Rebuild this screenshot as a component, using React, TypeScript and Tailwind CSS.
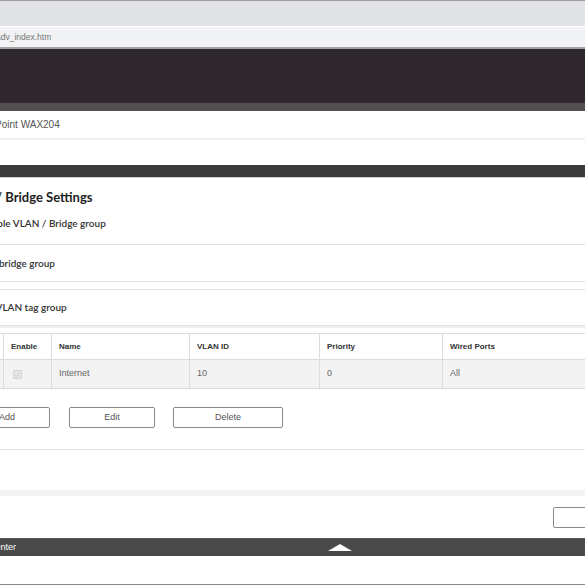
import React from "react";

const cols = "grid grid-cols-[24px_48px_138px_130px_123px_200px]";

function Cell({ children, className = "" }: { children?: React.ReactNode; className?: string }) {
  return (
    <div className={`flex items-center border-r border-[#dcdcdc] pl-[7px] ${className}`}>{children}</div>
  );
}

export default function App() {
  return (
    <div className="h-[585px] w-[585px] overflow-hidden bg-white font-['Lato',sans-serif]">
      {/* browser chrome */}
      <div className="h-px bg-[#9d9da1]" />
      <div className="h-[25px] bg-[#e1e2e6]" />
      <div className="h-px bg-white" />
      <div className="flex h-[20px] items-center bg-[#f1f2f4] pl-px font-['Liberation_Sans',sans-serif] text-[8.5px] text-[#777]">
        <span className="-ml-[5px]">adv_index.htm</span>
      </div>
      <div className="h-[2px] bg-[#a3a3a6]" />

      {/* router header */}
      <div className="h-[54px] bg-[#2e272d]" />
      <div className="h-[8px] bg-[#534d52]" />
      <div className="flex h-[27px] items-center font-['Liberation_Sans',sans-serif] text-[10px] text-[#555]">
        <span className="-ml-[90.5px] whitespace-nowrap">NETGEAR Access Point WAX204</span>
      </div>
      <div className="h-[2px] bg-[#efefef]" />
      <div className="h-[25px]" />
      <div className="h-[12px] bg-[#3b3b3b]" />
      <div className="h-px bg-[#d0d0d0]" />

      {/* settings */}
      <div className="flex h-[39px] items-center whitespace-nowrap text-[13px] font-bold text-[#1e1e1e]">
        <span className="-ml-[42px]">VLAN / Bridge Settings</span>
      </div>
      <div className="h-[28px] border-b border-[#e2e2e2] whitespace-nowrap text-[10px] leading-[12px] font-semibold text-[#333]">
        <span className="-ml-[19px] inline-block">Enable VLAN / Bridge group</span>
      </div>
      <div className="flex h-[37px] items-center border-b border-[#e2e2e2] whitespace-nowrap text-[10px] font-semibold text-[#333]">
        <span className="-ml-[15px]">By bridge group</span>
      </div>
      <div className="mt-[7px] flex h-[37px] items-center border-y border-[#e2e2e2] whitespace-nowrap text-[10px] font-semibold text-[#333]">
        <span className="-ml-[18px]">By VLAN tag group</span>
      </div>
      <div className="h-[2px] bg-[#efefef]" />

      {/* table */}
      <div className="-ml-[20px] mt-[5px] font-['Liberation_Sans',sans-serif]">
        <div className={`${cols} h-[27px] border-y border-[#dcdcdc] text-[8px] font-bold text-[#333]`}>
          <Cell />
          <Cell>Enable</Cell>
          <Cell>Name</Cell>
          <Cell>VLAN ID</Cell>
          <Cell>Priority</Cell>
          <Cell className="border-r-0">Wired Ports</Cell>
        </div>
        <div className={`${cols} h-[29px] border-b border-[#dcdcdc] bg-[#f3f3f3] text-[9px] text-[#666]`}>
          <Cell />
          <Cell>
            <span className="ml-[2px] flex h-[9px] w-[9px] items-center justify-center rounded-[1px] border border-[#d4d4d4] bg-[#e6e6e6]">
              <svg viewBox="0 0 10 10" className="h-[7px] w-[7px]">
                <path d="M1.5 5.2 L4 7.5 L8.5 2.5" fill="none" stroke="#c8c8c8" strokeWidth="1.4" />
              </svg>
            </span>
          </Cell>
          <Cell>Internet</Cell>
          <Cell>10</Cell>
          <Cell>0</Cell>
          <Cell className="border-r-0">All</Cell>
        </div>
      </div>

      {/* buttons */}
      <div className="mt-[18px] flex gap-[19px] font-['Liberation_Sans',sans-serif] text-[9px] text-[#555]">
        <button className="-ml-[36px] h-[21px] w-[86px] rounded-[2px] border border-[#8a8a8a] bg-white">Add</button>
        <button className="h-[21px] w-[86px] rounded-[2px] border border-[#8a8a8a] bg-white">Edit</button>
        <button className="-ml-px h-[21px] w-[110px] rounded-[2px] border border-[#8a8a8a] bg-white">Delete</button>
      </div>
      <div className="mt-[21px] h-px bg-[#e4e4e4]" />
      <div className="mt-[40px] h-[6px] bg-[#f3f3f3]" />
      <div className="mt-[11px] flex h-[21px]">
        <div className="ml-[553px] h-[21px] w-[50px] shrink-0 rounded-[2px] border border-[#8a8a8a]" />
      </div>

      {/* footer */}
      <div className="mt-[10px] flex h-[18px] items-center border-t border-[#5a5a5a] bg-[#4a4a4a] font-['Liberation_Sans',sans-serif] text-[9px] text-white">
        <span className="-ml-[32px] w-[80px] shrink-0 whitespace-nowrap">Help Center</span>
        <div className="ml-[280px] h-0 w-0 border-x-[12px] border-b-[7px] border-x-transparent border-b-white" />
      </div>
      <div className="h-[28px]" />
      <div className="h-px bg-[#8a8a8a]" />
    </div>
  );
}
